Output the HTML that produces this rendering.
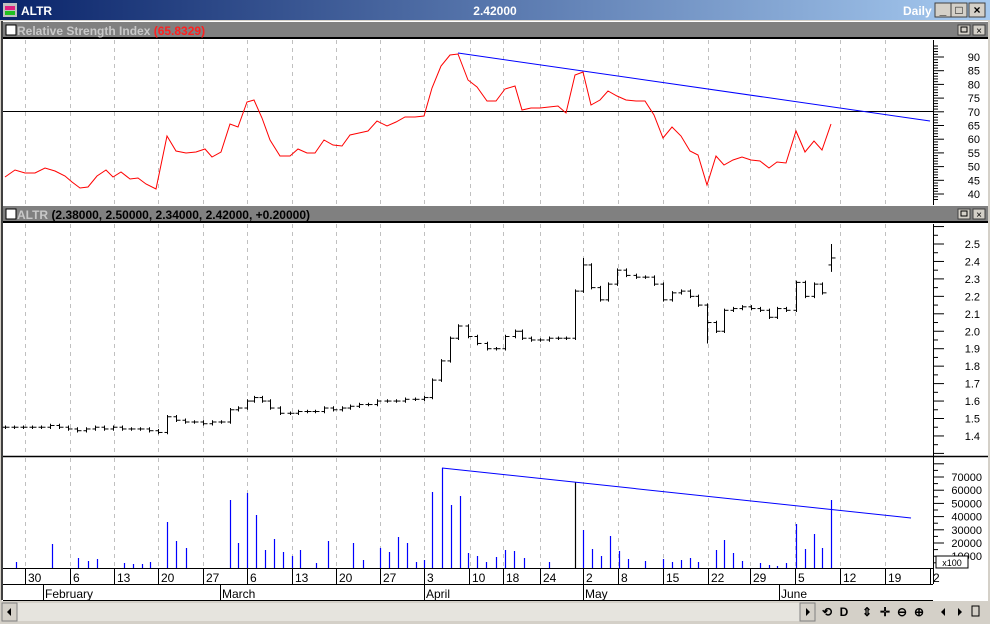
<!DOCTYPE html>
<html><head><meta charset="utf-8"><style>
body{margin:0;width:990px;height:624px;overflow:hidden;background:#d4d0c8;font-family:"Liberation Sans",sans-serif;position:relative}
#tb{position:absolute;left:0;top:0;width:990px;height:20px;background:linear-gradient(90deg,#0a246a,#a6caf0)}
svg{position:absolute;left:0;top:0}
</style></head><body>
<div id="tb"></div>
<svg id="s" width="990" height="624" xmlns="http://www.w3.org/2000/svg" font-family="Liberation Sans, sans-serif"></svg>
<script>
var s=document.getElementById('s');var h='';
function R(x,y,w,hh,f,st){h+='<rect x="'+x+'" y="'+y+'" width="'+w+'" height="'+hh+'" fill="'+f+'"'+(st?' stroke="'+st+'"':'')+'/>';}
function L(x1,y1,x2,y2,c,w,d){h+='<line x1="'+x1+'" y1="'+y1+'" x2="'+x2+'" y2="'+y2+'" stroke="'+c+'" stroke-width="'+(w||1)+'"'+(d?' stroke-dasharray="'+d+'"':'')+'/>';}
function T(x,y,t,sz,c,wt,anc){h+='<text x="'+x+'" y="'+y+'" font-size="'+sz+'" fill="'+c+'"'+(wt?' font-weight="bold"':'')+(anc?' text-anchor="'+anc+'"':'')+'>'+t+'</text>';}
R(3,3,14,14,'#c0c0c0');R(5,6,10,4,'#e0207f');R(5,11,10,4,'#20c020');
T(21,15,'ALTR',12,'#fff',1);T(495,15,'2.42000',12,'#fff',1,'middle');T(903,15,'Daily',12,'#fff',1);
[[935,'_'],[951,'□'],[969,'×']].forEach(function(b){R(b[0],3,16,14,'#d4d0c8','#404040');T(b[0]+8,14,b[1],12,'#000',1,'middle');});
R(2,21,986,580,'#fff');
L(2,21,2,600,'#404040',2);
function hdr(y,t1,t2,c2){R(3,y,985,16,'#808080');L(3,y+16,988,y+16,'#000',2);R(6,y+3,10,10,'#fff','#000');h+='<text x="17" y="'+(y+13)+'" font-size="12" font-weight="bold" fill="#c8c8c8">'+t1+' <tspan fill="'+c2+'">'+t2+'</tspan></text>';R(958,y+3,12,10,'#d4d0c8','#404040');R(973,y+3,12,10,'#d4d0c8','#404040');T(979,y+12,'×',10,'#000',0,'middle');R(961,y+5,6,5,'none','#000');}
hdr(22,'Relative Strength Index','(65.8329)','#ff2020');
hdr(206,'ALTR','(2.38000, 2.50000, 2.34000, 2.42000, +0.20000)','#000');
var gx=[25,70,114,158,203,247,292,336,380,424,470,503,540,583,618,663,708,750,795,840,885];
gx.forEach(function(x){L(x+.5,40,x+.5,205,'#c0c0c0',1,'4,4');L(x+.5,224,x+.5,455,'#c0c0c0',1,'4,4');L(x+.5,458,x+.5,568,'#c0c0c0',1,'4,4');});
L(3,456.5,988,456.5,'#000',1.5);
L(933.5,40,933.5,205,'#000');L(933.5,224,933.5,568,'#000');
for(var v=38;v<=94;v++){var y=57+(90-v)*2.74;if(y<40||y>204)continue;L(933,y,(v%5==0)?944:938,y,'#000');}
[90,85,80,75,70,65,60,55,50,45,40].forEach(function(v){T(980,57+(90-v)*2.74+4,v,11,'#000',0,'end');});
L(3,111.5,933,111.5,'#000');
var rsi=[[5,177],[15,170],[25,173],[35,173],[45,168],[55,171],[65,176],[72,182],[80,188],[88,187],[97,176],[106,170],[113,177],[121,172],[130,179],[138,178],[146,184],[156,189],[167,136],[176,151],[186,153],[196,152],[205,149],[212,157],[221,152],[230,124],[238,127],[247,102],[254,100],[262,118],[270,140],[280,156],[290,156],[298,149],[307,153],[315,153],[324,140],[333,145],[342,146],[350,135],[359,133],[368,131],[377,121],[387,126],[396,122],[405,117],[415,117],[424,116],[432,88],[441,66],[450,55],[458,54],[468,80],[477,87],[487,101],[496,101],[505,89],[515,86],[522,110],[531,108],[540,108],[549,107],[558,106],[566,113],[575,75],[583,72],[591,105],[600,100],[608,91],[617,96],[626,100],[636,101],[645,101],[654,115],[663,138],[672,127],[681,136],[690,151],[698,155],[707,185],[716,156],[724,165],[733,160],[742,157],[751,160],[760,161],[769,168],[777,162],[786,163],[796,131],[805,152],[814,141],[822,150],[831,124]];
h+='<polyline fill="none" stroke="#f00" stroke-width="1" points="'+rsi.map(function(p){return p.join(',')}).join(' ')+'"/>';
L(458,53,930,121,'#00f');
function py(v){return 244+(2.5-v)*174.5;}
for(var v=1.3;v<=2.6;v+=0.05){var y=py(v);if(y<226||y>454)continue;L(933,y,(Math.round(v*100)%10==0)?944:938,y,'#000');}
for(var v=1.4;v<=2.51;v+=0.1){T(980,py(v)+4,v.toFixed(1),11,'#000',0,'end');}
var pr=[[5,1.45],[14,1.45],[23,1.45],[32,1.45],[41,1.45],[50,1.46],[59,1.45],[68,1.44],[77,1.43],[86,1.44],[95,1.45],[104,1.44],[113,1.45],[122,1.44],[131,1.44],[140,1.44],[149,1.43],[158,1.42],[167,1.51],[176,1.49],[185,1.48],[194,1.48],[203,1.47],[212,1.48],[221,1.48],[230,1.55],[238,1.56],[247,1.60],[254,1.62],[262,1.60],[270,1.56],[280,1.53],[290,1.53],[298,1.54],[307,1.54],[315,1.54],[324,1.56],[333,1.55],[342,1.56],[350,1.57],[359,1.58],[368,1.58],[377,1.60],[387,1.60],[396,1.60],[405,1.61],[415,1.61],[424,1.62],[432,1.72],[441,1.83],[450,1.96],[458,2.03],[468,1.97],[477,1.93],[487,1.90],[496,1.90],[505,1.97],[515,2.00],[522,1.96],[531,1.95],[540,1.95],[549,1.96],[558,1.96],[566,1.96],[575,2.23],[583,2.38],[591,2.25],[600,2.18],[608,2.27],[617,2.35],[626,2.32],[636,2.31],[645,2.31],[654,2.27],[663,2.18],[672,2.22],[681,2.23],[690,2.20],[698,2.15],[707,2.05],[716,2.00],[724,2.12],[733,2.13],[742,2.14],[751,2.13],[760,2.12],[769,2.08],[777,2.13],[786,2.12],[796,2.28],[805,2.20],[814,2.27],[822,2.22],[831,2.42]];
var prev=1.45;pr.forEach(function(p){var o=prev,c=p[1];var hi=Math.max(o,c)+0.01,lo=Math.min(o,c)-0.01;if(p[0]==831){hi=2.5;lo=2.34;o=2.38;}if(p[0]==583){hi=2.42;}if(p[0]==707){lo=1.93;}var x=p[0]+.5;L(x,py(hi),x,py(lo),'#000');L(x-3,py(o),x,py(o),'#000');L(x,py(c),x+4,py(c),'#000');prev=c;});
for(var v=0;v<=80000;v+=5000){var y=477+(70000-v)*0.00132;if(y<459||y>567)continue;L(933,y,(v%10000==0)?944:938,y,'#000');}
for(var v=70000;v>=10000;v-=10000){T(982,477+(70000-v)*0.00132+4,v,11,'#000',0,'end');}
R(936,556,32,12,'#fff','#000');T(952,566,'x100',9,'#000',0,'middle');
var vol=[[16,562],[52,544],[78,558],[88,561],[97,559],[124,563],[133,564],[142,564],[150,562],[167,522],[176,541],[186,548],[230,500],[238,543],[247,493],[256,515],[265,550],[274,539],[283,552],[292,556],[300,550],[316,563],[328,541],[353,543],[363,560],[380,548],[389,552],[398,537],[407,543],[416,562],[424,560],[432,492],[442,468],[451,505],[460,496],[468,553],[477,556],[486,562],[496,557],[505,550],[514,551],[524,558],[549,562],[575,482],[583,530],[592,549],[601,556],[610,536],[619,551],[628,559],[645,561],[663,559],[672,562],[681,560],[690,558],[698,562],[716,550],[724,540],[733,553],[742,561],[760,563],[769,565],[777,566],[786,563],[796,524],[805,549],[814,534],[822,548],[831,500]];
vol.forEach(function(p){L(p[0]+.5,p[1],p[0]+.5,568,p[0]==575?'#000':'#00f',1.2);});
L(442,468,911,518,'#00f');
R(3,568,930,33,'#fff');L(3,568.5,933,568.5,'#000');L(3,584.5,933,584.5,'#000');L(3,600.5,933,600.5,'#000');L(933.5,568,933.5,584,'#000');
var dl=[[25,'30'],[70,'6'],[114,'13'],[158,'20'],[203,'27'],[247,'6'],[292,'13'],[336,'20'],[380,'27'],[424,'3'],[469,'10'],[503,'18'],[540,'24'],[583,'2'],[618,'8'],[663,'15'],[708,'22'],[750,'29'],[795,'5'],[840,'12'],[885,'19'],[930,'2']];
dl.forEach(function(d){L(d[0]+.5,568,d[0]+.5,584,'#000');T(d[0]+3,582,d[1],12,'#000');});
[[43,'February'],[220,'March'],[424,'April'],[583,'May'],[779,'June']].forEach(function(m){L(m[0]+.5,584,m[0]+.5,600,'#000');T(m[0]+2,598,m[1],12,'#000');});
R(0,601,990,23,'#d4d0c8');R(17,603,797,18,'#e6e4de');
R(2,603,15,18,'#d4d0c8','#808080');h+='<polygon points="11,608 11,616 7,612" fill="#000"/>';
R(800,603,15,18,'#d4d0c8','#808080');h+='<polygon points="806,608 806,616 810,612" fill="#000"/>';
[[827,'⟲'],[844,'D'],[867,'⇕'],[885,'✛'],[902,'⊖'],[919,'⊕']].forEach(function(b){T(b[0],616,b[1],12,'#000',1,'middle');});
h+='<polygon points="945,608 945,616 941,612" fill="#000"/><polygon points="958,608 958,616 962,612" fill="#000"/>';
R(972,606,7,10,'none','#000');
s.innerHTML=h;
</script>
</body></html>
